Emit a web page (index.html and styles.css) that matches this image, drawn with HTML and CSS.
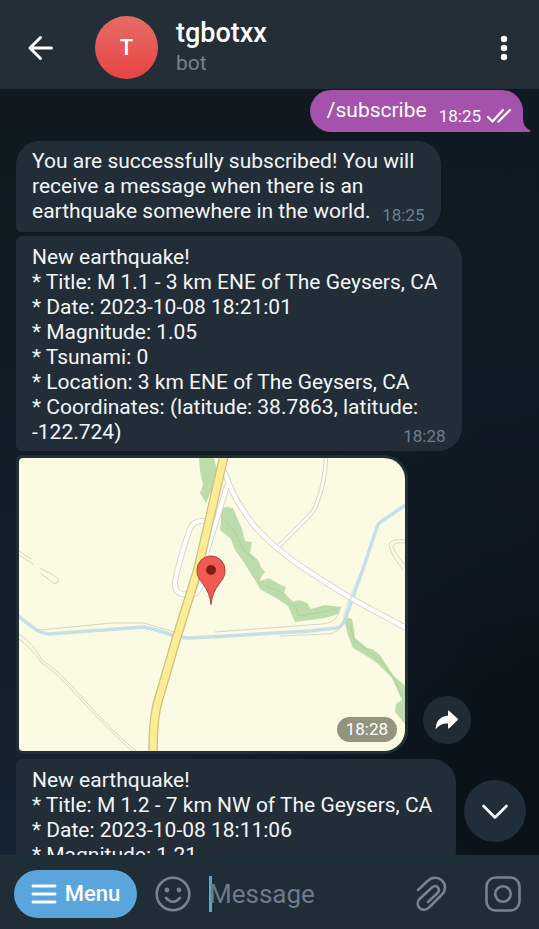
FILE: index.html
```html
<!DOCTYPE html>
<html lang="en">
<head>
<meta charset="utf-8">
<meta name="viewport" content="width=device-width, initial-scale=1">
<title>tgbotxx</title>
<link rel="stylesheet" href="styles.css">
</head>
<body>
<div class="app">
  <header class="topbar">
    <button class="icon-btn back" aria-label="Back">
      <svg width="28" height="28" viewBox="0 0 28 28" fill="none" stroke="#fff" stroke-width="3" stroke-linecap="round" stroke-linejoin="round"><path d="M25.500 14H4M14.500 3.500L4 14l10.500 10.500"/></svg>
    </button>
    <div class="avatar">T</div>
    <div class="peer">
      <h1 class="peer-name">tgbotxx</h1>
      <p class="peer-status">bot</p>
    </div>
    <button class="icon-btn" aria-label="More options">
      <svg width="24" height="28" viewBox="0 0 24 28" fill="#fff"><circle cx="12" cy="5" r="3.200"/><circle cx="12" cy="14" r="3.200"/><circle cx="12" cy="23" r="3.200"/></svg>
    </button>
  </header>

  <main class="chat">
    <article class="bubble out">
      <p class="out-text">/subscribe</p>
      <span class="out-meta"><time>18:25</time>
        <svg width="26" height="16" viewBox="0 0 26 16" fill="none" stroke="#fff" stroke-width="2.200" stroke-linecap="round" stroke-linejoin="round"><path d="M2 9l4.500 4.500L17 2M12.500 13.500L24 2"/></svg>
      </span>
      <svg class="tail" width="9" height="24" viewBox="0 0 9 24" fill="#a452ac"><path d="M0 0c1 0 1 4 1 9c0 7 2 11 7 13c1 1 .5 2-1 2H0z"/></svg>
    </article>

    <article class="bubble in first">
      <p class="text">You are successfully subscribed! You will<br>receive a message when there is an<br>earthquake somewhere in the world.<span class="time-room"></span></p>
      <time class="time">18:25</time>
    </article>

    <article class="bubble in">
      <p class="text">New earthquake!<br>* Title: M 1.1 - 3 km ENE of The Geysers, CA<br>* Date: 2023-10-08 18:21:01<br>* Magnitude: 1.05<br>* Tsunami: 0<br>* Location: 3 km ENE of The Geysers, CA<br>* Coordinates: (latitude: 38.7863, latitude:<br>-122.724)</p>
      <time class="time">18:28</time>
    </article>

    <div class="map-row">
      <article class="map-card">
        <svg class="map" viewBox="19 458 386 293" role="img" aria-label="Map of the earthquake location" fill="none" stroke-linejoin="round" stroke-linecap="round">
          <rect x="19" y="458" width="386" height="293" fill="#fbfae3"/>
          <g fill="#bddcab">
            <path d="M199 458h15l4 17-12 28-6-10 3-8-3-14z"/>
            <path d="M221 508l6-1 6 1 5 12 4 9 3 12 7 1-2 11 8 7 3 7 4 5-4 5-1 4 9-3 10 6 7 3-2 6 8 9 7-2 8 3 4 6 14-4 16 2-3 7-13 4-30 4-7-16-12-8-16-9-3-6-6-9-8-13-8-11-4-11-11-9 1-9z"/>
            <path d="M345 617l7 2 2 10 1 9 12 10 5 1 8 6 13 20 12 11v38l-10-12 1-8 6-4-10-22-15-15-12-8-12-7-5-13-3-12z"/>
          </g>
          <g stroke="#9fcb96" stroke-width="1" opacity=".6">
            <path d="M225 520l10 12 8 17 11 11M265 586l19 7 9 9 6 14 18-3 20-4M350 625l4 15 16 12 13 12 12 16 7 16"/>
          </g>
          <path d="M18 616l13 10q8 7 18 8l94-7q12 2 26 7 8 3 19 4l22-1 100-6 26-3q6-1 9-8l18-51 14-42q1-4 5-6l25-17" stroke="#c8dfea" stroke-width="3.500"/>
          <g stroke="#d4d4c8" stroke-width="1">
            <path d="M36 629q7 2 14 0l62-6h32l30 9M215 632l107-8q11-1 16-9l3-8M280 636l46-2q12 0 16-10l6-11"/>
            <path d="M19 551l12 8M19 555l14 9M40 568l13 7q8 4 4 8-3 2-6-2l-11-8"/>
            <path d="M19 634q14 9 23 26 14 9 28 24l26 29q24 25 40 38M19 639q12 9 22 23 16 12 28 25l27 29q20 21 36 35"/>
            <path d="M405 540q-15-2-16 5 2 10 14 25M405 543q-11-1-12 3 1 6 12 19"/>
          </g>
          <path d="M326 457q-1 25-8 43-2 9-10 17l-31 31" stroke="#d4d4c8" stroke-width="4.500"/>
          <path d="M326 457q-1 25-8 43-2 9-10 17l-31 31" stroke="#fffef4" stroke-width="2.500"/>
          <g stroke="#d8d8ce" stroke-width="6">
            <path d="M225 473q9 28 31 55 20 21 43 37 30 20 55 35l54 29"/>
            <path d="M227 486l-20 65-6 34q-4 11-11 10l-8-1q-8-2-7-13 7-31 15-52 3-9 15-8"/>
          </g>
          <g stroke="#fff" stroke-width="4">
            <path d="M225 473q9 28 31 55 20 21 43 37 30 20 55 35l54 29"/>
            <path d="M227 486l-20 65-6 34q-4 11-11 10l-8-1q-8-2-7-13 7-31 15-52 3-9 15-8"/>
          </g>
          <path d="M358 580l-10 25-4 12" stroke="#c8dfea" stroke-width="3" opacity=".6"/>
          <path d="M224 456l-26 113-23 74q-7 25-16 55-6 18-6 55" stroke="#cfc07b" stroke-width="9.500"/>
          <path d="M224 456l-26 113-23 74q-7 25-16 55-6 18-6 55" stroke="#fbed96" stroke-width="7"/>
          <path d="M211 604q-1-11-8-20c-4-5-6-8-6-14a14 14 0 0 1 28 0c0 6-2 9-6 14q-7 9-8 20z" fill="#ee5b50" stroke="#b83c34" stroke-width="1"/>
          <circle cx="211" cy="570" r="5" fill="#851c18"/>
        </svg>
        <time class="map-time">18:28</time>
      </article>
      <button class="forward" aria-label="Forward">
        <svg width="24" height="20" viewBox="0 0 24 20" fill="#fff"><path d="M13 1.500q0-1.500 1.200-.500l8.300 7.500q1 .9 0 1.800l-8.300 8q-1.200 1-1.200-.500v-4.300C8 13.200 4.500 14.500 1.500 18.500q-.9 1-.8-.5C1.300 10.500 6 6.300 13 5.600z"/></svg>
      </button>
    </div>

    <article class="bubble in">
      <p class="text">New earthquake!<br>* Title: M 1.2 - 7 km NW of The Geysers, CA<br>* Date: 2023-10-08 18:11:06<br>* Magnitude: 1.21</p>
    </article>

    <button class="to-bottom" aria-label="Scroll to bottom">
      <svg width="28" height="18" viewBox="0 0 28 18" fill="none" stroke="#fff" stroke-width="2.600" stroke-linecap="round" stroke-linejoin="round"><path d="M2.500 4L14 15.500 25.500 4"/></svg>
    </button>
  </main>

  <footer class="composer">
    <button class="menu">
      <svg width="26" height="20" viewBox="0 0 26 20" stroke="#fff" stroke-width="2.800" stroke-linecap="round"><path d="M2 2h22M2 10h22M2 18h22"/></svg>
      Menu
    </button>
    <button class="icon-btn" aria-label="Emoji">
      <svg width="36" height="36" viewBox="0 0 36 36" fill="none" stroke="#74838e" stroke-width="2.600" stroke-linecap="round"><circle cx="18" cy="18" r="16.300"/><path d="M11 22q7 7.500 14 0"/><g fill="#74838e" stroke="none"><circle cx="12" cy="14" r="2.400"/><circle cx="24" cy="14" r="2.400"/></g></svg>
    </button>
    <div class="field">
      <span class="caret"></span>
      <input class="input" type="text" placeholder="Message" aria-label="Message">
    </div>
    <button class="icon-btn" aria-label="Attach file">
      <svg width="34" height="36" viewBox="0 0 34 36" fill="none" stroke="#74838e" stroke-width="2.600" stroke-linecap="round" stroke-linejoin="round"><path d="M3 14L12 5.500C17 .5 23 .8 27 4.500s4 9.500 0 14L14.500 31C11.500 34.500 7 34.500 4.500 32s-2.500-6.500.5-9.500L17 11.500c2-2 4.500-2 6 0s1.200 3.800-.5 5.500L13 26"/></svg>
    </button>
    <button class="icon-btn" aria-label="Camera">
      <svg width="36" height="36" viewBox="0 0 36 36" fill="none" stroke="#74838e" stroke-width="2.600"><rect x="1.500" y="1.500" width="33" height="33" rx="9"/><circle cx="18" cy="18" r="7.800"/></svg>
    </button>
  </footer>
</div>
</body>
</html>
```
FILE: styles.css
```css
* {
  box-sizing: border-box;
}

body,
h1,
p {
  margin: 0;
}

body {
  font-family: Roboto, "Liberation Sans", sans-serif;
  color: #f3f6f8;
  background: #101a24;
}

button {
  border: 0;
  padding: 0;
  background: none;
  font: inherit;
  color: inherit;
}

svg {
  display: block;
}

.app {
  display: flex;
  flex-direction: column;
  height: 100vh;
}

.topbar {
  display: flex;
  align-items: center;
  flex: none;
  height: 89px;
  padding: 6px 23px 0 26px;
  background: #232e36;
}

.icon-btn {
  display: flex;
  flex: none;
}

.avatar {
  display: flex;
  align-items: center;
  justify-content: center;
  width: 63px;
  height: 63px;
  margin: 0 18px 0 41px;
  border-radius: 50%;
  background: linear-gradient(#e56c66, #e84444);
  color: #fff;
  font-size: 22px;
  font-weight: 500;
}

.peer {
  flex: 1;
}

.peer-name {
  padding-top: 1px;
  font-size: 27px;
  font-weight: 500;
  line-height: 30px;
  color: #fff;
}

.peer-status {
  font-size: 21px;
  line-height: 30px;
  color: #73828c;
}

.chat {
  position: relative;
  display: flex;
  flex: 1;
  flex-direction: column;
  align-items: flex-start;
  gap: 4px;
  min-height: 0;
  overflow: hidden;
  padding: 1px 16px 0;
  background:
    radial-gradient(circle at 100% 90%, #091016, transparent 45%),
    linear-gradient(100deg, transparent 60%, #101a24),
    linear-gradient(#0f191f, #111c26 50%, #142332);
}

.bubble {
  flex: none;
  font-size: 21px;
  line-height: 25px;
}

.in {
  display: grid;
  padding: 9px 16px 6px;
  border-radius: 6px 24px 24px 6px;
  background: #222d38;
}

.first {
  margin-top: 5px;
  padding: 8px 16px;
  border-top-left-radius: 24px;
}

.text,
.time {
  grid-area: 1 / 1;
}

.text {
  padding-right: 8px;
  white-space: nowrap;
}

.time {
  align-self: end;
  justify-self: end;
  font-size: 17px;
  line-height: 18px;
  color: #6f7f8b;
}

.time-room {
  display: inline-block;
  width: 46px;
}

.out {
  position: relative;
  display: flex;
  gap: 12px;
  align-self: flex-end;
  height: 42px;
  padding: 8px 11px 0 17px;
  border-radius: 21px 21px 0 21px;
  background: #a452ac;
  color: #fff;
}

.out-meta {
  display: flex;
  align-items: center;
  gap: 5px;
  height: 36px;
  font-size: 17px;
}

.tail {
  position: absolute;
  right: -8px;
  bottom: 0;
}

.map-row {
  display: flex;
  flex: none;
  align-items: flex-end;
  gap: 15px;
  margin-bottom: 1px;
}

.map-card {
  position: relative;
  padding: 3px;
  border-radius: 6px 24px 24px 6px;
  background: #222d38;
}

.map {
  width: 386px;
  max-width: 100%;
  border-radius: 4px 21px 21px 4px;
}

.map-time {
  position: absolute;
  right: 11px;
  bottom: 12px;
  padding: 0 9px;
  border-radius: 13px;
  background: #92947f;
  color: #fff;
  font-size: 17px;
  line-height: 25px;
}

.forward,
.to-bottom {
  display: flex;
  align-items: center;
  justify-content: center;
  border-radius: 50%;
}

.forward {
  width: 48px;
  height: 48px;
  margin-bottom: 10px;
  background: #202b34;
}

.to-bottom {
  position: absolute;
  right: 13px;
  bottom: 13px;
  width: 62px;
  height: 62px;
  background: #202e39;
}

.composer {
  display: flex;
  align-items: center;
  flex: none;
  gap: 18px;
  height: 74px;
  padding: 3px 18px 0 14px;
  background: #1f2d37;
}

.menu {
  display: flex;
  align-items: center;
  justify-content: center;
  flex: none;
  gap: 8px;
  width: 123px;
  height: 48px;
  border-radius: 24px;
  background: #5aa5dc;
  color: #fff;
  font-size: 22px;
  font-weight: 500;
}

.field {
  display: flex;
  align-items: center;
  flex: 1;
  min-width: 0;
}

.caret {
  flex: none;
  width: 3px;
  height: 36px;
  margin-right: -3px;
  background: #5aa5dc;
}

.input {
  flex: 1;
  min-width: 0;
  padding: 0;
  border: 0;
  outline: 0;
  background: none;
  color: #fff;
  font: inherit;
  font-size: 26px;
}

.input::placeholder {
  color: #6c7b86;
  opacity: 1;
}

.composer .icon-btn:last-child {
  margin-left: 18px;
}
```
